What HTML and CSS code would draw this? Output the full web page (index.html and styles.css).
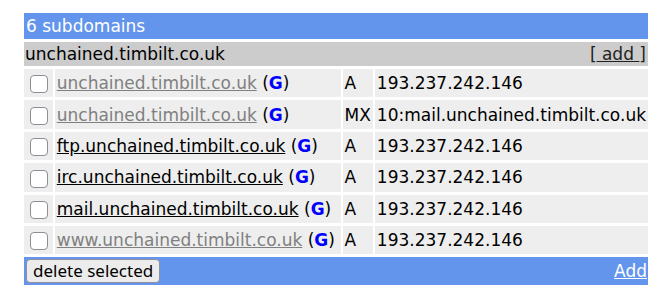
FILE: index.html
```html
<!doctype html>
<html lang="en">
  <head>
    <meta charset="UTF-8" />
    <title>Subdomains</title>
    <link rel="stylesheet" href="styles.css">
  </head>
  <body>
    <form class="zone-form">
      <table class="zone-table">
        <tr class="title-row">
          <td colspan="4">6 subdomains</td>
        </tr>
        <tr class="zone-row">
          <td colspan="4">
            unchained.timbilt.co.uk
            <span class="add-link">[<a href="#">&nbsp;add&nbsp;</a>]</span>
          </td>
        </tr>
        <tr class="record-row">
          <td class="check-cell"><input type="checkbox" /></td>
          <td class="name-cell"><a class="inactive" href="#">unchained.timbilt.co.uk</a> (<a class="g-link" href="#">G</a>)</td>
          <td class="type-cell">A</td>
          <td class="value-cell">193.237.242.146</td>
        </tr>
        <tr class="record-row">
          <td class="check-cell"><input type="checkbox" /></td>
          <td class="name-cell"><a class="inactive" href="#">unchained.timbilt.co.uk</a> (<a class="g-link" href="#">G</a>)</td>
          <td class="type-cell">MX</td>
          <td class="value-cell">10:mail.unchained.timbilt.co.uk</td>
        </tr>
        <tr class="record-row">
          <td class="check-cell"><input type="checkbox" /></td>
          <td class="name-cell"><a href="#">ftp.unchained.timbilt.co.uk</a> (<a class="g-link" href="#">G</a>)</td>
          <td class="type-cell">A</td>
          <td class="value-cell">193.237.242.146</td>
        </tr>
        <tr class="record-row">
          <td class="check-cell"><input type="checkbox" /></td>
          <td class="name-cell"><a href="#">irc.unchained.timbilt.co.uk</a> (<a class="g-link" href="#">G</a>)</td>
          <td class="type-cell">A</td>
          <td class="value-cell">193.237.242.146</td>
        </tr>
        <tr class="record-row">
          <td class="check-cell"><input type="checkbox" /></td>
          <td class="name-cell"><a href="#">mail.unchained.timbilt.co.uk</a> (<a class="g-link" href="#">G</a>)</td>
          <td class="type-cell">A</td>
          <td class="value-cell">193.237.242.146</td>
        </tr>
        <tr class="record-row">
          <td class="check-cell"><input type="checkbox" /></td>
          <td class="name-cell"><a class="inactive" href="#">www.unchained.timbilt.co.uk</a> (<a class="g-link" href="#">G</a>)</td>
          <td class="type-cell">A</td>
          <td class="value-cell">193.237.242.146</td>
        </tr>
        <tr class="footer-row">
          <td colspan="4">
            <button type="button" class="delete-button">delete selected</button>
            <a class="footer-add" href="#">Add</a>
          </td>
        </tr>
      </table>
    </form>
  </body>
</html>
```

FILE: styles.css
```css
body {
  margin: 0;
  font-family: "DejaVu Sans", Verdana, sans-serif;
  font-size: 17px;
  color: #000;
  background-color: #fff;
}
.zone-form {
  margin: 10px 0 0 22px;
}
.zone-table {
  width: 628px;
  border-spacing: 2px 3px;
  white-space: nowrap;
}
.zone-table td {
  padding: 0 2px;
}
.title-row td {
  height: 25px;
  background-color: #6495ed;
  color: #fff;
  padding-top: 0;
  padding-bottom: 1px;
}
.zone-row td {
  height: 24px;
  background-color: #cccccc;
  padding-left: 1px;
}
.add-link {
  float: right;
  color: #222;
}
.add-link a {
  color: #222;
}
.record-row td {
  height: 28.4px;
  background-color: #eeeeee;
}
.check-cell {
  width: 25px;
}
.check-cell input {
  appearance: none;
  box-sizing: border-box;
  width: 18px;
  height: 18px;
  margin: 1px 0 0 4px;
  background-color: #fff;
  border: 1px solid #8e8e96;
  border-radius: 4px;
  vertical-align: middle;
}
.name-cell {
  width: 282px;
}
.name-cell a {
  color: #000;
}
.name-cell a.inactive {
  color: #808080;
}
.name-cell a.g-link {
  color: #0000ff;
  font-weight: bold;
  text-decoration: none;
}
.type-cell {
  width: 25px;
}
.footer-row td {
  height: 28px;
  background-color: #6495ed;
  padding: 0 1px 0 2px;
}
.delete-button {
  font-family: "Noto Sans", sans-serif;
  font-size: 17px;
  height: 24px;
  padding: 0 6px;
  line-height: 20px;
  background-color: #ececec;
  border: 1px solid #8f8f9d;
  border-radius: 4px;
  color: #000;
  vertical-align: middle;
}
.footer-add {
  float: right;
  color: #fff;
  margin-top: 2px;
}
```
